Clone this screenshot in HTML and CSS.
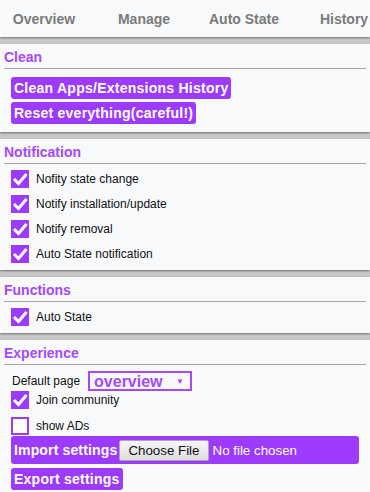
FILE: index.html
```html
<!DOCTYPE html>
<html lang="en">
<head>
    <meta charset="UTF-8">
    <meta name="viewport" content="width=device-width, initial-scale=1.0">
    <title>Options</title>
    <link rel="stylesheet" href="styles.css">
</head>
<body>
    <nav class="tabs">
        <a class="tab">Overview</a>
        <a class="tab">Manage</a>
        <a class="tab">Auto State</a>
        <a class="tab">History</a>
    </nav>

    <section class="panel">
        <h2 class="panel-title">Clean</h2>
        <div class="actions">
            <button class="btn">Clean Apps/Extensions History</button>
            <button class="btn">Reset everything(careful!)</button>
        </div>
    </section>

    <section class="panel">
        <h2 class="panel-title">Notification</h2>
        <div class="options">
            <label class="check"><span class="box on"><svg viewBox="0 0 18 18"><polyline points="3,9 7.5,13.5 15.5,4"/></svg></span>Nofity state change</label>
            <label class="check"><span class="box on"><svg viewBox="0 0 18 18"><polyline points="3,9 7.5,13.5 15.5,4"/></svg></span>Notify installation/update</label>
            <label class="check"><span class="box on"><svg viewBox="0 0 18 18"><polyline points="3,9 7.5,13.5 15.5,4"/></svg></span>Notify removal</label>
            <label class="check"><span class="box on"><svg viewBox="0 0 18 18"><polyline points="3,9 7.5,13.5 15.5,4"/></svg></span>Auto State notification</label>
        </div>
    </section>

    <section class="panel">
        <h2 class="panel-title">Functions</h2>
        <div class="options">
            <label class="check"><span class="box on"><svg viewBox="0 0 18 18"><polyline points="3,9 7.5,13.5 15.5,4"/></svg></span>Auto State</label>
        </div>
    </section>

    <section class="panel last">
        <h2 class="panel-title">Experience</h2>
        <div class="experience">
            <div class="field">
                <span class="field-label">Default page</span>
                <label class="select">
                    <select>
                        <option>overview</option>
                        <option>manage</option>
                        <option>auto state</option>
                        <option>history</option>
                    </select>
                    <span class="caret">&#9660;</span>
                </label>
            </div>
            <label class="check"><span class="box on"><svg viewBox="0 0 18 18"><polyline points="3,9 7.5,13.5 15.5,4"/></svg></span>Join community</label>
            <label class="check ads"><span class="box"></span>show ADs</label>
            <div class="import">
                <span class="import-label">Import settings</span>
                <input type="file" class="file">
            </div>
            <button class="btn export">Export settings</button>
        </div>
    </section>
</body>
</html>
```

FILE: styles.css
```css
body {
    font-family: "Liberation Sans", Arial, sans-serif;
    margin: 0;
    background-color: #c8c8c8;
    height: 492px;
    overflow: hidden;
}
.tabs {
    display: flex;
    height: 37px;
    align-items: center;
    background: #f8f9fa;
    box-shadow: 0 1px 2px rgba(0, 0, 0, 0.45);
    margin-bottom: 7px;
    overflow: hidden;
}
.tab {
    flex: 0 0 100px;
    text-align: center;
    font-size: 14px;
    font-weight: bold;
    color: #7b7b7b;
}
.tab:first-child {
    margin-left: -6px;
}
.panel {
    background: #f8f9fb;
    padding-bottom: 7px;
    margin-bottom: 7px;
    box-shadow: 0 1px 2px rgba(0, 0, 0, 0.45);
}
.panel.last {
    margin-bottom: 0;
    min-height: 160px;
}
.panel-title {
    margin: 0 4px;
    padding: 5px 0 3px;
    font-size: 14px;
    line-height: 16px;
    color: #a449ff;
    border-bottom: 1px solid #a6a6a6;
}
.actions {
    display: flex;
    flex-direction: column;
    align-items: flex-start;
    gap: 3px;
    padding: 8px 11px 1px;
}
.btn {
    font-family: inherit;
    font-size: 14px;
    font-weight: bold;
    line-height: 16px;
    letter-spacing: 0.25px;
    color: white;
    background: #9c3bfd;
    border: none;
    border-radius: 3px;
    padding: 3px 3px;
    cursor: pointer;
}
.options {
    display: flex;
    flex-direction: column;
    gap: 7px;
    padding: 6px 11px 0;
}
.check {
    display: flex;
    align-items: center;
    gap: 7px;
    font-size: 12px;
    color: #111;
    height: 18px;
}
.box {
    width: 18px;
    height: 18px;
    box-sizing: border-box;
    background: white;
    border: 2px solid #9c3bfd;
    display: flex;
}
.box.on {
    background: #9c3bfd;
    border: none;
}
.box svg {
    width: 18px;
    height: 18px;
    fill: none;
    stroke: white;
    stroke-width: 3;
}
.experience {
    display: flex;
    flex-direction: column;
    align-items: flex-start;
    padding: 6px 11px 0;
}
.field {
    display: flex;
    align-items: center;
    gap: 8px;
    padding-left: 1px;
    font-size: 12px;
    color: #111;
}
.select {
    display: flex;
    align-items: center;
    width: 104px;
    height: 20px;
    box-sizing: border-box;
    border: 2px solid #a449ff;
}
.select select {
    appearance: none;
    border: none;
    background: transparent;
    font-family: inherit;
    font-size: 16px;
    font-weight: bold;
    color: #a449ff;
    padding: 0 0 0 4px;
    width: 82px;
    outline: none;
}
.caret {
    font-size: 8px;
    color: #a449ff;
    margin-left: 4px;
}
.ads {
    margin-top: 8px;
}
.import {
    display: flex;
    align-items: center;
    gap: 2px;
    align-self: stretch;
    margin-top: 1px;
    height: 28px;
    padding-left: 3px;
    background: #9c3bfd;
    border-radius: 3px;
}
.import-label {
    flex-shrink: 0;
    white-space: nowrap;
    font-size: 14px;
    font-weight: bold;
    letter-spacing: 0.15px;
    color: white;
}
.file {
    font-family: inherit;
    font-size: 13.33px;
    color: white;
}
.file::file-selector-button {
    font-family: inherit;
    font-size: 13.33px;
    color: #111;
    height: 21px;
    padding: 0 8px;
    margin-right: 4px;
    border: 1px solid #a9a9a9;
    border-radius: 2px;
    background: linear-gradient(#f6f6f6, #dedede);
}
.export {
    margin-top: 4px;
}
```
